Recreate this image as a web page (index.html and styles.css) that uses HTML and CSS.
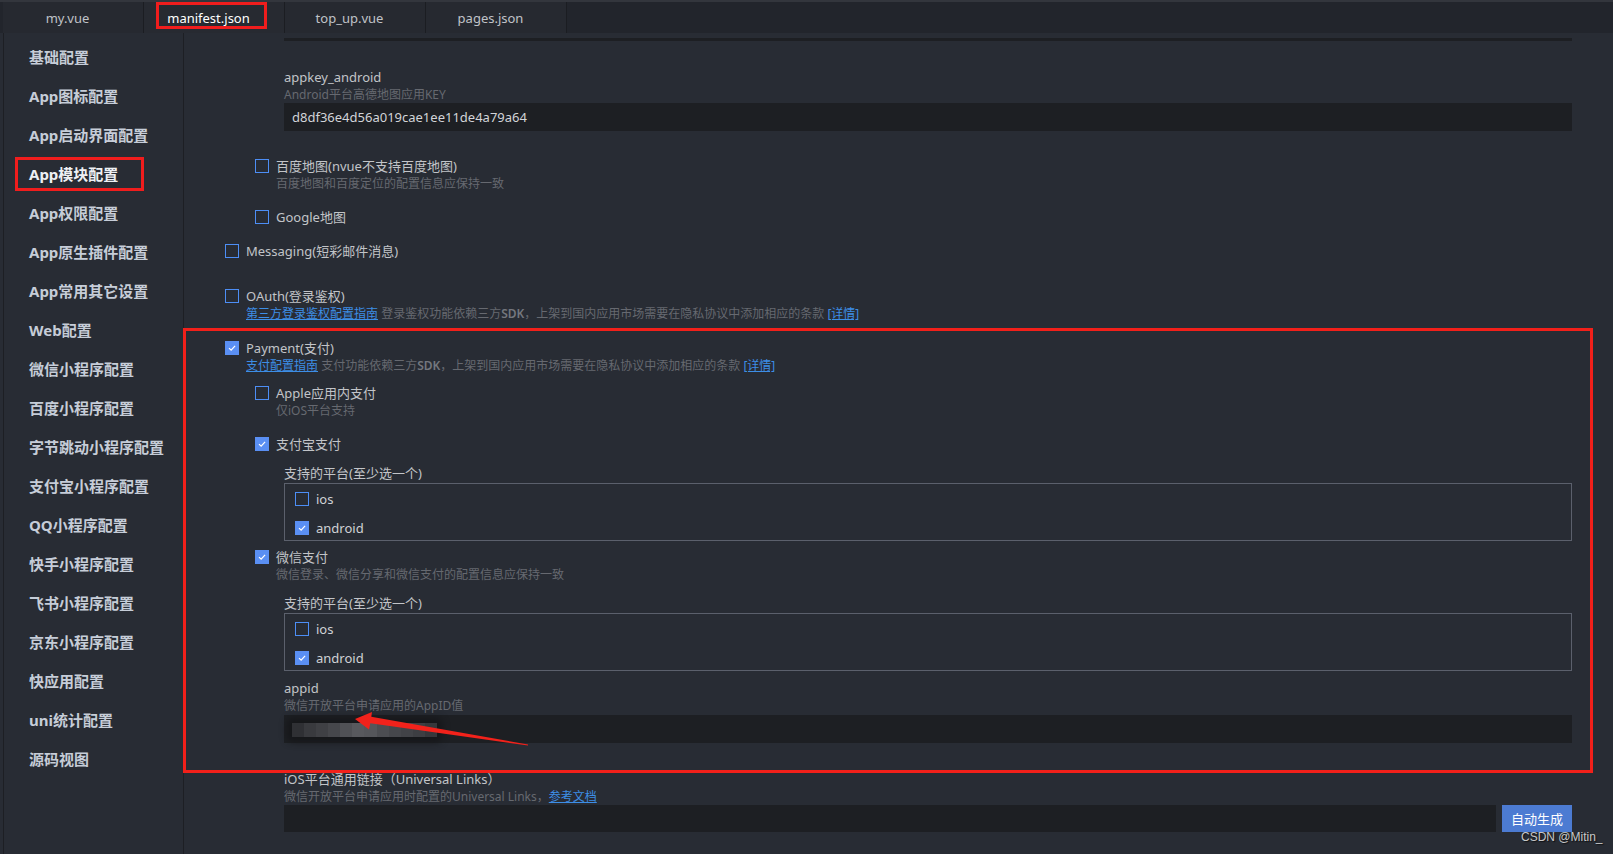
FILE: index.html
```html
<!DOCTYPE html>
<html lang="zh-CN">
<head>
<meta charset="utf-8">
<title>manifest.json</title>
<link rel="stylesheet" href="styles.css">
</head>
<body>
<div class="app">
  <header class="tabbar">
    <div class="tab"><span class="tab-label">my.vue</span></div>
    <div class="tab active"><span class="tab-label mark">manifest.json</span></div>
    <div class="tab"><span class="tab-label">top_up.vue</span></div>
    <div class="tab"><span class="tab-label">pages.json</span></div>
  </header>
  <div class="body">
    <nav class="sidebar">
      <div class="nav-item"><span>基础配置</span></div>
      <div class="nav-item"><span>App图标配置</span></div>
      <div class="nav-item"><span>App启动界面配置</span></div>
      <div class="nav-item active"><span>App模块配置</span></div>
      <div class="nav-item"><span>App权限配置</span></div>
      <div class="nav-item"><span>App原生插件配置</span></div>
      <div class="nav-item"><span>App常用其它设置</span></div>
      <div class="nav-item"><span>Web配置</span></div>
      <div class="nav-item"><span>微信小程序配置</span></div>
      <div class="nav-item"><span>百度小程序配置</span></div>
      <div class="nav-item"><span>字节跳动小程序配置</span></div>
      <div class="nav-item"><span>支付宝小程序配置</span></div>
      <div class="nav-item"><span>QQ小程序配置</span></div>
      <div class="nav-item"><span>快手小程序配置</span></div>
      <div class="nav-item"><span>飞书小程序配置</span></div>
      <div class="nav-item"><span>京东小程序配置</span></div>
      <div class="nav-item"><span>快应用配置</span></div>
      <div class="nav-item"><span>uni统计配置</span></div>
      <div class="nav-item"><span>源码视图</span></div>
    </nav>
    <main class="content">
      <div class="strip"></div>

      <div class="field f-appkey">
        <div class="f-label">appkey_android</div>
        <div class="f-sub">Android平台高德地图应用KEY</div>
        <div class="input">d8df36e4d56a019cae1ee11de4a79a64</div>
      </div>

      <div class="opt nested o-baidu">
        <div class="opt-row"><span class="cb"></span><span class="opt-label">百度地图(nvue不支持百度地图)</span></div>
        <div class="opt-sub">百度地图和百度定位的配置信息应保持一致</div>
      </div>

      <div class="opt nested o-google">
        <div class="opt-row"><span class="cb"></span><span class="opt-label">Google地图</span></div>
      </div>

      <div class="opt o-msg">
        <div class="opt-row"><span class="cb"></span><span class="opt-label">Messaging(短彩邮件消息)</span></div>
      </div>

      <div class="opt o-oauth">
        <div class="opt-row"><span class="cb"></span><span class="opt-label">OAuth(登录鉴权)</span></div>
        <div class="opt-sub"><a class="link">第三方登录鉴权配置指南</a> 登录鉴权功能依赖三方<b>SDK</b>，上架到国内应用市场需要在隐私协议中添加相应的条款 <a class="link">[详情]</a></div>
      </div>

      <section class="redbox">
        <div class="opt o-pay">
          <div class="opt-row"><span class="cb on"><svg viewBox="0 0 14 14"><polyline points="3.5,7.2 6,9.6 10.6,4.6"/></svg></span><span class="opt-label">Payment(支付)</span></div>
          <div class="opt-sub"><a class="link">支付配置指南</a> 支付功能依赖三方<b>SDK</b>，上架到国内应用市场需要在隐私协议中添加相应的条款 <a class="link">[详情]</a></div>
        </div>

        <div class="opt nested o-apple">
          <div class="opt-row"><span class="cb"></span><span class="opt-label">Apple应用内支付</span></div>
          <div class="opt-sub">仅iOS平台支持</div>
        </div>

        <div class="opt nested o-alipay">
          <div class="opt-row"><span class="cb on"><svg viewBox="0 0 14 14"><polyline points="3.5,7.2 6,9.6 10.6,4.6"/></svg></span><span class="opt-label">支付宝支付</span></div>
        </div>

        <div class="field f-platform">
          <div class="f-label">支持的平台(至少选一个)</div>
          <div class="platforms">
            <div class="opt-row"><span class="cb"></span><span class="opt-label bright">ios</span></div>
            <div class="opt-row"><span class="cb on"><svg viewBox="0 0 14 14"><polyline points="3.5,7.2 6,9.6 10.6,4.6"/></svg></span><span class="opt-label bright">android</span></div>
          </div>
        </div>

        <div class="opt nested o-wx">
          <div class="opt-row"><span class="cb on"><svg viewBox="0 0 14 14"><polyline points="3.5,7.2 6,9.6 10.6,4.6"/></svg></span><span class="opt-label">微信支付</span></div>
          <div class="opt-sub">微信登录、微信分享和微信支付的配置信息应保持一致</div>
        </div>

        <div class="field f-platform f-platform2">
          <div class="f-label">支持的平台(至少选一个)</div>
          <div class="platforms">
            <div class="opt-row"><span class="cb"></span><span class="opt-label bright">ios</span></div>
            <div class="opt-row"><span class="cb on"><svg viewBox="0 0 14 14"><polyline points="3.5,7.2 6,9.6 10.6,4.6"/></svg></span><span class="opt-label bright">android</span></div>
          </div>
        </div>

        <div class="field f-appid">
          <div class="f-label">appid</div>
          <div class="f-sub">微信开放平台申请应用的AppID值</div>
          <div class="input input-masked">
            <div class="mosaic">
              <i class="m1"></i><i class="m2"></i><i class="m3"></i><i class="m4"></i><i class="m5"></i><i class="m6"></i><i class="m7"></i><i class="m8"></i><i class="m9"></i><i class="m10"></i><i class="m11"></i><i class="m12"></i>
            </div>
          </div>
        </div>
      </section>

      <div class="field f-ul">
        <div class="f-label">iOS平台通用链接（Universal Links）</div>
        <div class="f-sub">微信开放平台申请应用时配置的Universal Links，<a class="link">参考文档</a></div>
        <div class="input-row">
          <div class="input"></div>
          <button class="btn">自动生成</button>
        </div>
      </div>
    </main>
  </div>

  <svg class="annot" viewBox="0 0 1613 854" width="1613" height="854">
    <polygon points="355,719 372,712 371.3,716.8 528,744.5 528,745.5 370.3,723.3 369,729.5" fill="#f2221b"/>
  </svg>
  <div class="watermark">CSDN @Mitin_</div>
</div>
</body>
</html>
```

FILE: styles.css
```css
* { box-sizing: border-box; }
html, body { margin: 0; padding: 0; }
body {
  background: #282c34;
  font-family: "Noto Sans", "Noto Sans CJK SC", sans-serif;
  color: #c2c4c8;
}
.app {
  position: relative;
  width: 1613px;
  height: 854px;
  overflow: hidden;
  background: #282c34;
}

/* ---------- tabs ---------- */
.tabbar {
  height: 33px;
  background: #22252c;
  border-top: 2px solid #33363d;
  display: flex;
  padding-left: 3px;
}
.tab {
  width: 141px;
  height: 31px;
  background: #262930;
  border-right: 1px solid #1b1d22;
  display: flex;
  justify-content: center;
  padding-right: 6px;
  font-size: 13px;
  color: #c0c3c8;
}
.tab.active { color: #ffffff; background: #272a31; }
.tab-label {
  height: 27px;
  display: flex;
  align-items: center;
  justify-content: center;
  padding-top: 5px;
  padding-right: 5px;
  border: 3px solid transparent;
  white-space: nowrap;
}
.tab-label.mark {
  width: 111px;
  border-color: #f01d1d;
}

/* ---------- layout ---------- */
.body {
  display: flex;
  height: 821px;
  padding-left: 3px;
}
.sidebar {
  width: 181px;
  flex: none;
  border-left: 1px solid #1d1f24;
  border-right: 1px solid #1d1f24;
  padding-top: 4px;
}
.nav-item {
  height: 39px;
  display: flex;
  align-items: center;
}
.nav-item span {
  margin-left: 11px;
  width: 129px;
  height: 34px;
  padding-left: 11px;
  border: 3px solid transparent;
  display: flex;
  align-items: center;
  font-size: 15px;
  font-weight: 700;
  color: #c6cdd8;
  white-space: nowrap;
}
.nav-item.active span {
  border-color: #f01d1d;
  color: #eef0f4;
}

.content {
  flex: 1;
  padding-left: 41px;
  padding-right: 41px;
  font-size: 13px;
}

.strip {
  margin-left: 59px;
  margin-top: 5px;
  height: 3px;
  background: #1d1f23;
}

/* ---------- fields ---------- */
.field { margin-left: 59px; }
.f-label { line-height: 18px; color: #c2c4c8; font-size: 13px; }
.f-sub { line-height: 17px; color: #666970; font-size: 12px; }
.input {
  height: 28px;
  background: #1d1f23;
  color: #d2d4d8;
  font-size: 13px;
  line-height: 28px;
  padding-left: 8px;
}
.link { color: #3d8ee6; text-decoration: underline; }

.f-appkey { margin-top: 27px; }

/* ---------- options ---------- */
.opt-row {
  display: flex;
  align-items: center;
  height: 18px;
}
.opt-label { margin-left: 7px; color: #c2c4c8; line-height: 18px; white-space: nowrap; }
.opt-label.bright { color: #d0d2d6; }
.opt-sub {
  margin-left: 21px;
  line-height: 18px;
  font-size: 12px;
  color: #666970;
  white-space: nowrap;
}
.opt-sub b { font-weight: 600; color: #74777e; }
.opt.nested { margin-left: 30px; }

.cb {
  width: 14px;
  height: 14px;
  flex: none;
  border: 1px solid #4d8ef5;
  display: inline-flex;
}
.cb.on { background: #5a8ff3; border-color: #5a8ff3; }
.cb svg { width: 12px; height: 12px; }
.cb svg polyline { fill: none; stroke: #ffffff; stroke-width: 1.4; }

.o-baidu { margin-top: 26px; }
.o-google { margin-top: 15px; }
.o-msg { margin-top: 16px; }
.o-oauth { margin-top: 27px; }

/* ---------- red annotation box ---------- */
.redbox {
  margin-top: 5px;
  margin-left: -42px;
  margin-right: -21px;
  padding: 8px 18px 27px 39px;
  border: 3px solid #f2201a;
}
.o-pay .opt-sub { line-height: 17px; }
.o-apple { margin-top: 10px; }
.o-alipay { margin-top: 15px; }
.f-platform { margin-top: 11px; }
.platforms {
  margin-top: 1px;
  height: 58px;
  border: 1px solid #5b606c;
  padding: 6px 10px 0;
  display: flex;
  flex-direction: column;
  gap: 11px;
}
.o-wx { margin-top: 7px; }
.f-platform2 { margin-top: 10px; }
.f-appid { margin-top: 8px; }
.f-appid .f-sub { line-height: 18px; }

.input-masked {
  display: flex;
  align-items: flex-start;
  padding-top: 8px;
}
.mosaic {
  width: 145px;
  height: 14px;
  display: flex;
  box-shadow: 0 0 7px 5px #16171a;
  border-radius: 2px;
}
.mosaic i { flex: 1; display: block; }
.m1 { background: #2f3034; }
.m2 { background: #393a3e; }
.m3 { background: #3f4044; }
.m4 { background: #46474b; }
.m5 { background: #505155; }
.m6 { background: #58595d; }
.m7 { background: #55565a; }
.m8 { background: #4c4d51; }
.m9 { background: #46474b; }
.m10 { background: #424347; }
.m11 { background: #3d3e42; }
.m12 { background: #36373b; }

/* ---------- universal links ---------- */
.f-ul { margin-top: -3px; }
.input-row { display: flex; gap: 6px; }
.input-row .input { flex: 1; height: 27px; }
.btn {
  width: 70px;
  height: 27px;
  border: 0;
  padding: 0;
  background: #4c7bd2;
  color: #ffffff;
  font-family: "Noto Sans CJK SC", sans-serif;
  font-size: 13px;
}

/* ---------- overlays ---------- */
.annot {
  position: absolute;
  left: 0;
  top: 0;
  pointer-events: none;
}
.watermark {
  position: absolute;
  left: 1521px;
  top: 830px;
  font-family: "Liberation Sans", sans-serif;
  font-size: 12px;
  color: #c8c8c8;
  text-shadow: 1px 1px 1px #101114;
}
```
